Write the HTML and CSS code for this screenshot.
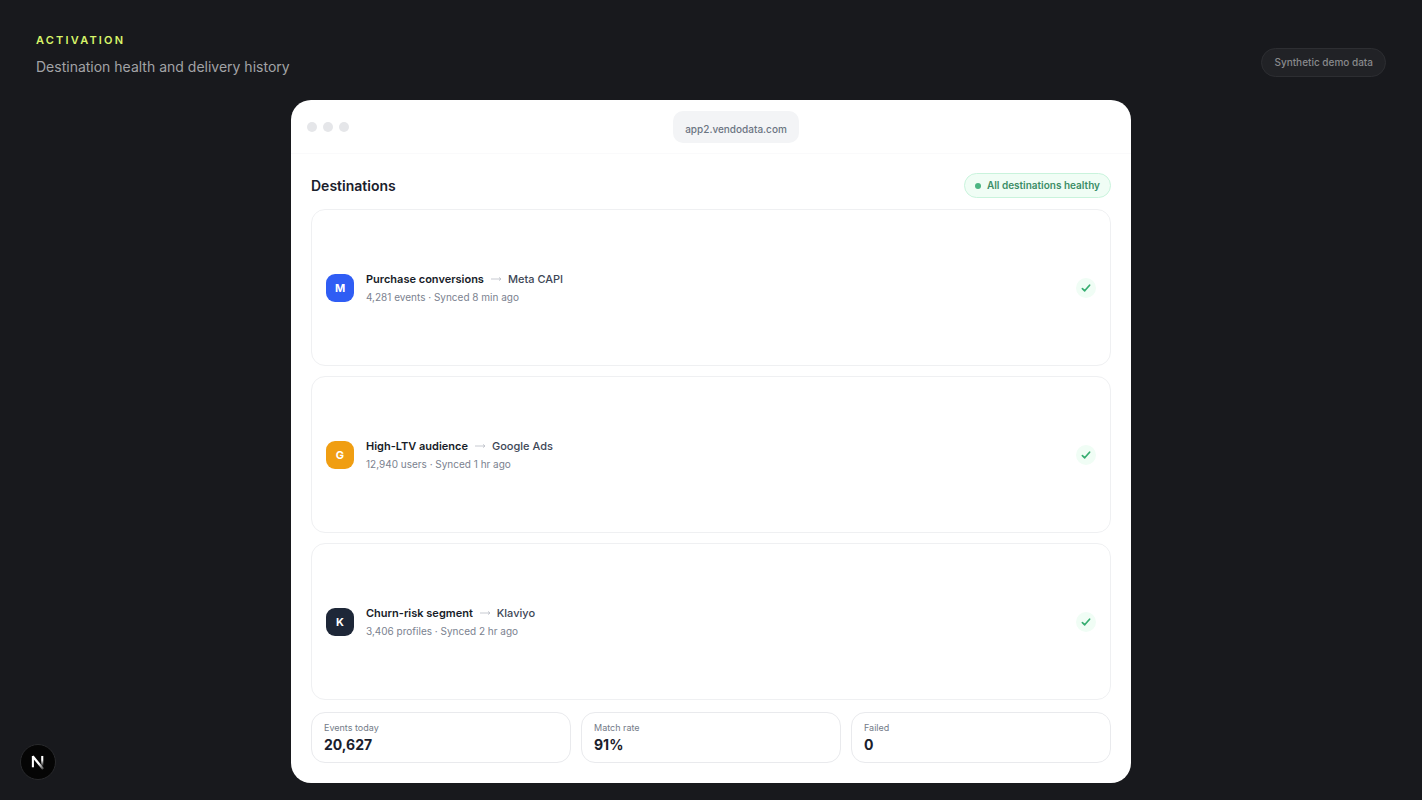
FILE: index.html
```html
<!DOCTYPE html>
<html lang="en">
<head>
<meta charset="utf-8">
<meta name="viewport" content="width=device-width, initial-scale=1">
<title>Destination health and delivery history</title>
<link rel="stylesheet" href="styles.css">
</head>
<body>
<header class="page-header">
  <div>
    <p class="eyebrow">ACTIVATION</p>
    <h1 class="page-title">Destination health and delivery history</h1>
  </div>
  <span class="demo-badge">Synthetic demo data</span>
</header>
<main class="window">
  <div class="window-bar">
    <div class="dots"><span class="dot"></span><span class="dot"></span><span class="dot"></span></div>
    <span class="address">app2.vendodata.com</span>
  </div>
  <div class="content">
    <div class="section-head">
      <h2 class="section-title">Destinations</h2>
      <span class="health"><span class="health-dot"></span>All destinations healthy</span>
    </div>
    <ul class="rows">
      <li class="row">
        <span class="avatar avatar-blue">M</span>
        <div class="row-text">
          <p class="route"><strong>Purchase conversions</strong><svg class="arrow" viewBox="0 0 12 8" role="img" aria-label="to"><path d="M1 4H11M9 2.4 11 4 9 5.6"/></svg><span>Meta CAPI</span></p>
          <p class="meta">4,281 events · Synced 8 min ago</p>
        </div>
        <span class="status"><svg viewBox="0 0 12 12" role="img" aria-label="Healthy"><path d="M2.4 6.6 4.7 8.8 9.6 3.2"/></svg></span>
      </li>
      <li class="row">
        <span class="avatar avatar-amber">G</span>
        <div class="row-text">
          <p class="route"><strong>High-LTV audience</strong><svg class="arrow" viewBox="0 0 12 8" role="img" aria-label="to"><path d="M1 4H11M9 2.4 11 4 9 5.6"/></svg><span>Google Ads</span></p>
          <p class="meta">12,940 users · Synced 1 hr ago</p>
        </div>
        <span class="status"><svg viewBox="0 0 12 12" role="img" aria-label="Healthy"><path d="M2.4 6.6 4.7 8.8 9.6 3.2"/></svg></span>
      </li>
      <li class="row">
        <span class="avatar avatar-navy">K</span>
        <div class="row-text">
          <p class="route"><strong>Churn-risk segment</strong><svg class="arrow" viewBox="0 0 12 8" role="img" aria-label="to"><path d="M1 4H11M9 2.4 11 4 9 5.6"/></svg><span>Klaviyo</span></p>
          <p class="meta">3,406 profiles · Synced 2 hr ago</p>
        </div>
        <span class="status"><svg viewBox="0 0 12 12" role="img" aria-label="Healthy"><path d="M2.4 6.6 4.7 8.8 9.6 3.2"/></svg></span>
      </li>
    </ul>
    <dl class="stats">
      <div class="stat"><dt>Events today</dt><dd>20,627</dd></div>
      <div class="stat"><dt>Match rate</dt><dd>91%</dd></div>
      <div class="stat"><dt>Failed</dt><dd>0</dd></div>
    </dl>
  </div>
</main>
<button class="dev-button" type="button" aria-label="Open developer tools">
  <svg viewBox="0 0 36 36" aria-hidden="true">
    <defs>
      <linearGradient id="stem" x1="0" y1="0" x2="0" y2="1"><stop offset="0.4" stop-color="#fff"/><stop offset="1" stop-color="#fff" stop-opacity="0"/></linearGradient>
      <linearGradient id="slash" gradientUnits="userSpaceOnUse" x1="17" y1="17" x2="24" y2="26"><stop offset="0.3" stop-color="#fff"/><stop offset="1" stop-color="#fff" stop-opacity="0.2"/></linearGradient>
    </defs>
    <path d="M12.6 23.6V11.6" stroke="#fff" stroke-width="2.2"/>
    <path d="M12.4 12 23.4 25.4" stroke="url(#slash)" stroke-width="2.4"/>
    <rect x="21.4" y="11.6" width="2.2" height="11" fill="url(#stem)"/>
  </svg>
</button>
</body>
</html>
```

FILE: styles.css
```css
* { box-sizing: border-box; }

body, p, h1, h2, ul, dl, dd { margin: 0; }

body {
  display: flex;
  flex-direction: column;
  min-height: 100vh;
  padding: 32px 36px 17px;
  background: #18191d;
  color: #1a202c;
  font-family: Inter, "Liberation Sans", sans-serif;
}

.page-header {
  display: flex;
  align-items: flex-end;
  justify-content: space-between;
  margin-bottom: 23px;
}

.eyebrow {
  color: #d9f56a;
  font-size: 11px;
  font-weight: 600;
  line-height: 16px;
  letter-spacing: 0.2em;
}

.page-title {
  margin-top: 8px;
  color: #a2a3a6;
  font-size: 14px;
  font-weight: 400;
  line-height: 21px;
}

.demo-badge {
  padding: 6px 12px;
  border: 1px solid #2d2e32;
  border-radius: 999px;
  background: #212226;
  color: #88898c;
  font-size: 10px;
  font-weight: 500;
  line-height: 15px;
}

.window {
  display: flex;
  flex: 1;
  flex-direction: column;
  width: 100%;
  max-width: 840px;
  margin: 0 auto;
  overflow: hidden;
  border-radius: 20px;
  background: #fff;
}

.window-bar {
  display: flex;
  align-items: center;
  gap: 8px;
  padding: 11px 16px 10px;
  border-bottom: 1px solid #fafafb;
}

.dots { display: flex; gap: 6px; }

.dot {
  width: 10px;
  height: 10px;
  border-radius: 50%;
  background: #e5e6e9;
}

.address {
  margin: 0 auto;
  padding: 10px 12px 6px;
  border-radius: 10px;
  background: #f3f4f6;
  color: #6b7482;
  font-size: 10px;
  font-weight: 500;
  line-height: 16px;
}

.content {
  display: flex;
  flex: 1;
  flex-direction: column;
  padding: 19px 20px 20px;
}

.section-head {
  display: flex;
  align-items: center;
  justify-content: space-between;
  margin-bottom: 11px;
}

.section-title {
  font-size: 14px;
  font-weight: 600;
  line-height: 20px;
}

.health {
  display: flex;
  align-items: center;
  gap: 6px;
  padding: 4px 10px;
  border: 1px solid #c9f3dc;
  border-radius: 999px;
  background: #f0fdf5;
  color: #3c8e67;
  font-size: 10px;
  font-weight: 600;
  line-height: 15px;
}

.health-dot {
  width: 6px;
  height: 6px;
  border-radius: 50%;
  background: #4cb582;
}

.rows {
  display: grid;
  flex: 1;
  grid-auto-rows: 1fr;
  gap: 10px;
  padding: 0;
  list-style: none;
}

.row {
  display: flex;
  align-items: center;
  gap: 12px;
  padding: 12px 14px;
  border: 1px solid #eff0f2;
  border-radius: 14px;
}

.avatar {
  display: grid;
  place-items: center;
  width: 28px;
  height: 28px;
  border-radius: 9px;
  color: #fff;
  font-size: 11px;
  font-weight: 700;
}

.avatar-blue { background: #2f5df4; }
.avatar-amber { background: #f09e12; }
.avatar-navy { background: #1e2738; }

.row-text { flex: 1; }

.route {
  display: flex;
  align-items: center;
  gap: 6px;
  color: #3d4656;
  font-size: 11px;
  font-weight: 500;
  line-height: 17px;
}

.route strong {
  color: #171c28;
  font-weight: 600;
}

.arrow {
  width: 12px;
  height: 8px;
  fill: none;
  stroke: #b9bdc5;
  stroke-width: 0.8;
}

.meta {
  margin-top: 1px;
  color: #7b828f;
  font-size: 10px;
  line-height: 16px;
}

.status {
  display: grid;
  place-items: center;
  width: 20px;
  height: 20px;
  border-radius: 50%;
  background: #f0fdf5;
}

.status svg {
  width: 12px;
  height: 12px;
  fill: none;
  stroke: #36ad70;
  stroke-width: 1.7;
  stroke-linecap: round;
  stroke-linejoin: round;
}

.stats {
  display: grid;
  grid-template-columns: repeat(3, 1fr);
  gap: 10px;
  margin-top: 12px;
}

.stat {
  padding: 7px 12px;
  border: 1px solid #e9eaed;
  border-radius: 14px;
}

.stat dt {
  color: #737b88;
  font-size: 9px;
  line-height: 15px;
}

.stat dd {
  font-size: 14px;
  font-weight: 700;
  line-height: 20px;
}

.dev-button {
  position: fixed;
  bottom: 20px;
  left: 20px;
  width: 36px;
  height: 36px;
  padding: 0;
  border: 1px solid #292a2d;
  border-radius: 50%;
  background: #050505;
}

.dev-button svg { display: block; width: 100%; }
```
